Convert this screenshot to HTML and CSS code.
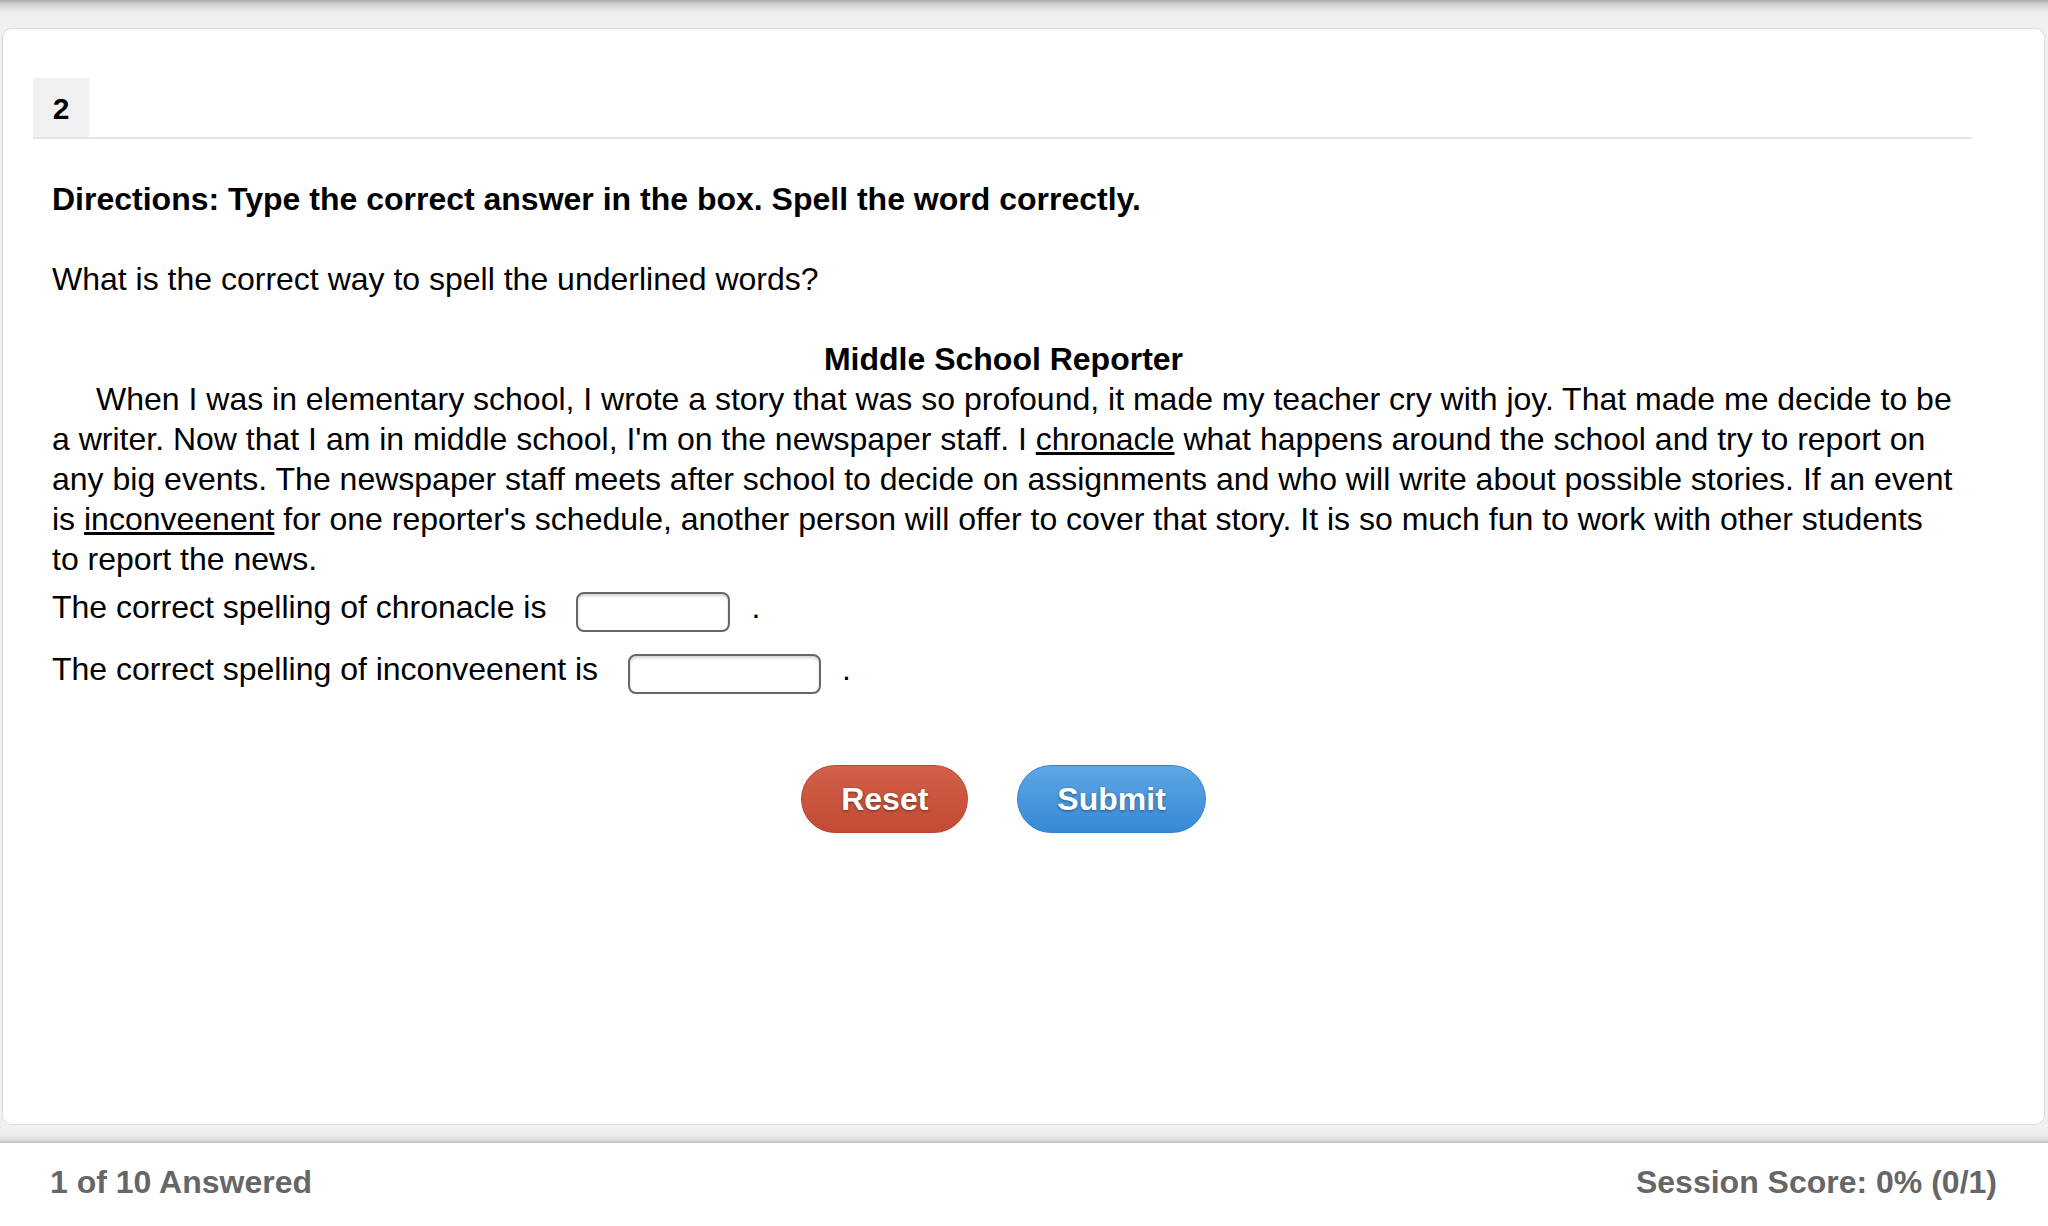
FILE: index.html
```html
<!DOCTYPE html>
<html lang="en">
<head>
<meta charset="utf-8">
<title>Question 2</title>
<link rel="stylesheet" href="styles.css">
</head>
<body>
<div class="page">
  <div class="card">
    <div class="qhead">
      <div class="qnum">2</div>
    </div>
    <div class="content">
      <p class="directions">Directions: Type the correct answer in the box. Spell the word correctly.</p>
      <p class="prompt">What is the correct way to spell the underlined words?</p>
      <div class="passage">
        <div class="title">Middle School Reporter</div>
        <p class="story">When I was in elementary school, I wrote a story that was so profound, it made my teacher cry with joy. That made me decide to be a writer. Now that I am in middle school, I'm on the newspaper staff. I <u>chronacle</u> what happens around the school and try to report on any big events. The newspaper staff meets after school to decide on assignments and who will write about possible stories. If an event is <u>inconveenent</u> for one reporter's schedule, another person will offer to cover that story. It is so much fun to work with other students to report the news.</p>
      </div>
      <div class="answer">
        <span>The correct spelling of chronacle is</span>
        <input type="text" class="box box-short" aria-label="correct spelling of chronacle">
        <span>.</span>
      </div>
      <div class="answer">
        <span>The correct spelling of inconveenent is</span>
        <input type="text" class="box box-long" aria-label="correct spelling of inconveenent">
        <span>.</span>
      </div>
      <div class="actions">
        <button class="btn btn-reset">Reset</button>
        <button class="btn btn-submit">Submit</button>
      </div>
    </div>
  </div>
  <div class="band"></div>
</div>
<div class="footer">
  <span>1 of 10 Answered</span>
  <span>Session Score: 0% (0/1)</span>
</div>
</body>
</html>
```
FILE: styles.css
```css
* { box-sizing: border-box; }
html, body { margin: 0; padding: 0; }
body {
  width: 2048px;
  height: 1226px;
  overflow: hidden;
  background: #ffffff;
  font-family: "Liberation Sans", Arial, sans-serif;
  font-size: 32px;
  line-height: 40px;
  color: #000;
}
.page {
  height: 1143px;
  padding-top: 28px;
  background: linear-gradient(to bottom, #a9a9a9 0px, #c9c9c9 3px, #e2e2e2 8px, #eeeeee 13px, #f0f0f0 20px, #f0f0f0 100%);
  display: flex;
  flex-direction: column;
}
.card {
  height: 1097px;
  margin: 0 3px 0 2px;
  background: #fff;
  border: 1px solid #dcdcdc;
  border-radius: 10px;
  padding: 49px 72px 0 30px;
}
.qhead {
  display: flex;
  height: 61px;
  border-bottom: 2px solid #e4e4e4;
}
.qnum {
  width: 56px;
  background: #f0f0f0;
  font-weight: bold;
  font-size: 30px;
  display: flex;
  align-items: center;
  justify-content: center;
  padding-top: 2px;
}
.content {
  padding: 0 17px 0 19px;
}
.content p { margin: 0; }
.directions {
  font-weight: bold;
  margin-top: 40px !important;
}
.prompt {
  margin-top: 40px !important;
}
.passage {
  margin-top: 40px;
}
.title {
  font-weight: bold;
  text-align: center;
}
.story {
  text-indent: 44px;
}
.answer {
  display: flex;
  align-items: center;
  height: 56px;
  margin-bottom: 6px;
  white-space: nowrap;
}
.box {
  height: 40px;
  margin: 10px 21px 0 30px;
  border: 2px solid #666;
  border-radius: 8px;
  box-shadow: inset 0 2px 3px rgba(0, 0, 0, 0.18);
  background: #fff;
  font: inherit;
  padding: 0 8px;
}
.box-short { width: 154px; }
.box-long { width: 193px; }
.actions {
  display: flex;
  justify-content: center;
  gap: 49px;
  margin-top: 68px;
}
.btn {
  height: 68px;
  border-radius: 34px;
  padding: 0 39px;
  font-family: "Liberation Sans", Arial, sans-serif;
  font-weight: bold;
  font-size: 32px;
  color: #fff;
  text-shadow: 0 1px 3px rgba(0, 0, 0, 0.45);
  border: 1px solid transparent;
  cursor: pointer;
}
.btn-reset {
  background: linear-gradient(to bottom, #d2604a 0%, #c24b34 100%);
  border-color: #b9462f;
}
.btn-submit {
  background: linear-gradient(to bottom, #5ea6e3 0%, #3789d8 100%);
  border-color: #3483d0;
}
.band {
  flex: 1;
  background: linear-gradient(to bottom, #f2f2f2 0%, #ebebeb 60%, #d8d8d8 85%, #bdbdbd 100%);
}
.footer {
  height: 83px;
  padding: 19px 51px 0 50px;
  display: flex;
  justify-content: space-between;
  font-weight: bold;
  font-size: 32px;
  line-height: 40px;
  color: #666;
}
```
